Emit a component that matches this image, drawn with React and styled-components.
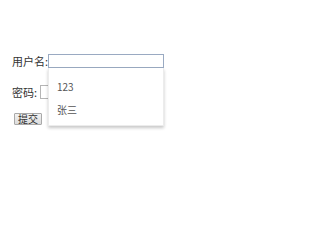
import React from "react";
import styled, { createGlobalStyle } from "styled-components";

const GlobalStyle = createGlobalStyle`
  body {
    margin: 0;
    background: #fff;
    font-family: "Noto Sans CJK SC", "DejaVu Sans", sans-serif;
    color: #333;
  }
`;

const Form = styled.form`
  width: 200px;
  height: 200px;
  box-sizing: border-box;
  padding: 54px 0 0 12px;
  display: flex;
  flex-direction: column;
  align-items: flex-start;
`;

const Row = styled.div`
  position: relative;
  display: flex;
  align-items: center;
  height: 14px;
  margin-bottom: ${(p) => p.gap || 0}px;
`;

const Label = styled.label`
  font-size: 11px;
  line-height: 14px;
  white-space: pre;
`;

const Input = styled.input`
  box-sizing: border-box;
  width: ${(p) => p.w}px;
  height: 14px;
  margin: 0;
  padding: 0 2px;
  border: 1px solid ${(p) => (p.focused ? "#9aaac2" : "#b5b5b5")};
  outline: none;
  background: #fff;
  font-size: 10px;
`;

const Suggest = styled.ul`
  position: absolute;
  left: 36px;
  top: 14px;
  width: 116px;
  height: 58px;
  margin: 0;
  padding: 7px 0 0;
  box-sizing: border-box;
  list-style: none;
  background: #fff;
  border: 1px solid #ececec;
  border-top: none;
  box-shadow: 0 2px 3px rgba(0, 0, 0, 0.22);
  z-index: 2;
`;

const SuggestItem = styled.li`
  height: 23px;
  line-height: 23px;
  padding-left: 8px;
  font-size: 10px;
  color: #555;
`;

const Submit = styled.button`
  box-sizing: border-box;
  width: 28px;
  height: 12px;
  margin: 0 0 0 2px;
  padding: 0;
  font-family: inherit;
  font-size: 10px;
  line-height: 10px;
  color: #333;
  background: linear-gradient(#f2f2f2, #dcdcdc);
  border: 1px solid #a9a9a9;
  border-radius: 1px;
`;

export default function App() {
  return (
    <>
      <GlobalStyle />
      <Form onSubmit={(e) => e.preventDefault()}>
        <Row gap={17}>
          <Label>用户名:</Label>
          <Input w={116} focused />
          <Suggest>
            <SuggestItem>123</SuggestItem>
            <SuggestItem>张三</SuggestItem>
          </Suggest>
        </Row>
        <Row gap={14}>
          <Label>密码: </Label>
          <Input w={100} type="password" />
        </Row>
        <Submit type="submit">提交</Submit>
      </Form>
    </>
  );
}
